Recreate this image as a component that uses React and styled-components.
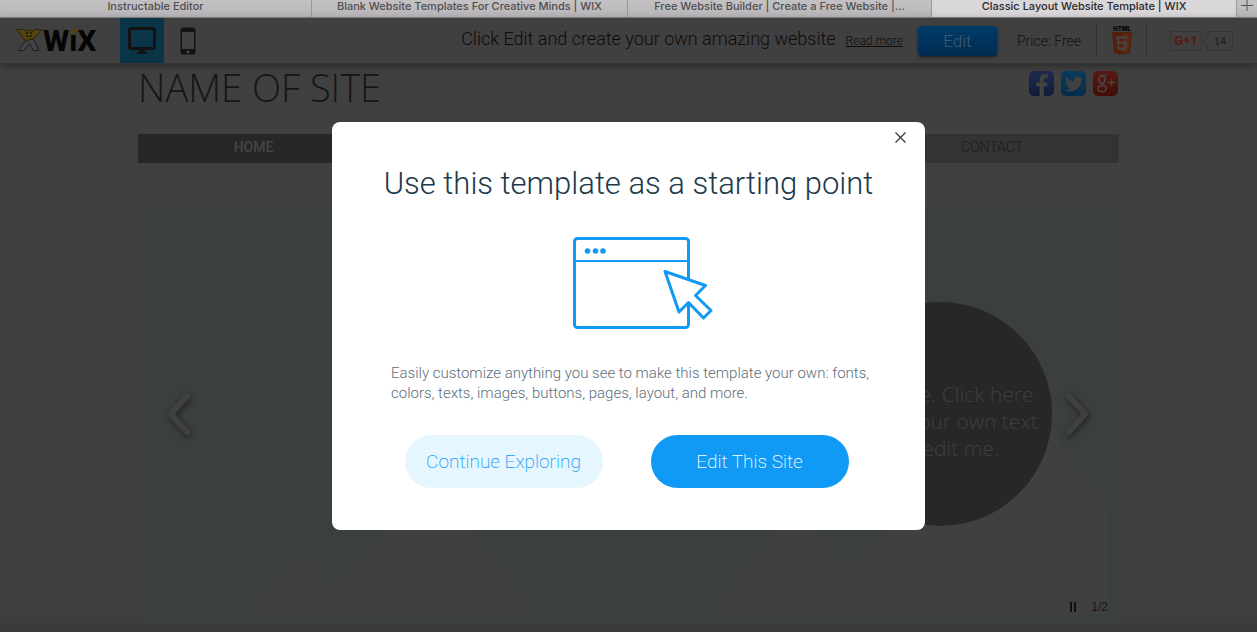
import React from "react"
import styled, { createGlobalStyle } from "styled-components"
import { FaFacebookF, FaTwitter } from "react-icons/fa"

const GlobalStyle = createGlobalStyle`
  * {
    box-sizing: border-box;
  }
  body {
    margin: 0;
    background: #404040;
    font-family: "Liberation Sans", Arial, sans-serif;
  }
  button {
    border: 0;
    padding: 0;
    background: none;
    font-family: inherit;
    cursor: pointer;
  }
  svg {
    display: block;
  }
`

const Page = styled.div`
  min-height: 100vh;
  overflow: hidden;
  background: linear-gradient(to top, #3a3a3a 0, #404040 28px);
`

/* browser tabs */
const TabBar = styled.nav`
  display: grid;
  grid-template-columns: 312fr 316fr 304fr 305fr 20px;
  height: 18px;
  border-bottom: 1px solid #8a898a;
  background: linear-gradient(#c3c1c3, #b9b7b9);
`

const Tab = styled.button`
  height: 17px;
  padding: 0 4px 4px;
  overflow: hidden;
  border-right: 1px solid #9a989a;
  background: ${props => (props.$active ? "#d9d7d9" : "transparent")};
  color: ${props => (props.$active ? "#2b292b" : "#504e51")};
  font-family: Inter, sans-serif;
  font-size: 11px;
  font-weight: 500;
  line-height: 13px;
  white-space: nowrap;
`

const NewTab = styled.button`
  display: flex;
  justify-content: center;
  height: 17px;
  color: #555;
`

/* editor bar */
const Header = styled.header`
  position: relative;
  display: flex;
  align-items: center;
  height: 46px;
  padding: 0 24px 0 16px;
  border-bottom: 1px solid #353535;
  background: #404040;
  box-shadow: 0 2px 8px rgba(0, 0, 0, 0.35);
`

const Logo = styled.a`
  margin-right: 20px;
`

const Device = styled.button`
  display: flex;
  align-items: center;
  justify-content: center;
  width: ${props => (props.$active ? "44px" : "48px")};
  height: 45px;
  background: ${props => (props.$active ? "#0a3447" : "transparent")};
`

const Promo = styled.div`
  display: flex;
  align-items: center;
  gap: 10px;
  margin-left: auto;
  color: #0c0c0c;
`

const PromoText = styled.p`
  margin: 0 0 3px;
  font-family: Roboto, sans-serif;
  font-size: 18px;
  font-weight: 300;
  line-height: 24px;
  white-space: nowrap;
`

const ReadMore = styled.a`
  color: #0c0c0c;
  font-family: Roboto, sans-serif;
  font-size: 12px;
  font-weight: 300;
  line-height: 16px;
  white-space: nowrap;
`

const EditButton = styled.button`
  width: 79px;
  height: 30px;
  margin: 0 20px 0 15px;
  border-radius: 4px;
  background: linear-gradient(#003d6b, #002a50);
  box-shadow: 0 1px 3px rgba(0, 0, 0, 0.6);
  color: #405b72;
  font-family: Roboto, sans-serif;
  font-size: 17px;
  font-weight: 300;
`

const Price = styled.span`
  margin-right: 15px;
  color: #101010;
  font-family: Roboto, sans-serif;
  font-size: 14px;
  font-weight: 300;
  white-space: nowrap;
`

const Badge = styled.div`
  display: flex;
  align-items: center;
  justify-content: center;
  width: 51px;
  height: 32px;
  margin-right: 23px;
  border: solid #303030;
  border-width: 0 1px;
`

const PlusOne = styled.button`
  width: 32px;
  height: 20px;
  border: 1px solid #353535;
  border-radius: 2px;
  color: #591812;
  font-family: Roboto, sans-serif;
  font-size: 13px;
  font-weight: 700;
`

const Count = styled.span`
  position: relative;
  width: 26px;
  height: 20px;
  margin-left: 5px;
  border: 1px solid #353535;
  border-radius: 2px;
  color: #1c1c1c;
  font-size: 11px;
  line-height: 18px;
  text-align: center;

  &::before {
    content: "";
    position: absolute;
    top: 6px;
    left: -4px;
    width: 6px;
    height: 6px;
    border: solid #353535;
    border-width: 0 0 1px 1px;
    background: #404040;
    transform: rotate(45deg);
  }
`

/* template preview */
const Site = styled.main`
  max-width: 981px;
  margin: 0 auto;
`

const SiteTop = styled.div`
  display: flex;
  justify-content: space-between;
  height: 70px;
`

const SiteName = styled.h1`
  margin: 0;
  color: #161616;
  font-family: "Open Sans", sans-serif;
  font-size: 38px;
  font-weight: 300;
  line-height: 46px;
  white-space: nowrap;
`

const Socials = styled.div`
  display: flex;
  gap: 7px;
  padding: 7px 1px 0 0;
`

const Social = styled.a`
  display: flex;
  align-items: ${props => props.$align || "center"};
  justify-content: center;
  width: 25px;
  height: 25px;
  overflow: hidden;
  border-radius: 5px;
  background: ${props => props.$bg};
  color: #414141;
`

const SiteNav = styled.nav`
  display: flex;
  justify-content: space-between;
  margin-bottom: 43px;
  background: #333;
`

const NavLink = styled.a`
  width: ${props => (props.$active ? "231px" : "254px")};
  background: ${props => (props.$active ? "#272727" : "transparent")};
  color: ${props => (props.$active ? "#454545" : "#1c1c1c")};
  font-family: Roboto, sans-serif;
  font-size: 14px;
  font-weight: ${props => (props.$active ? 500 : 300)};
  line-height: 26px;
  padding-bottom: 3px;
  text-align: center;
  text-decoration: none;
`

const Gallery = styled.section`
  position: relative;
  display: flex;
  align-items: center;
  justify-content: space-between;
  height: 418px;
  padding: 0 29px 2px 28px;
  background: #3b3f3f;
`

const Scene = styled.svg`
  position: absolute;
  inset: 0;
`

const Bubble = styled.div`
  position: absolute;
  top: 96px;
  right: 67px;
  display: flex;
  align-items: center;
  justify-content: center;
  width: 224px;
  height: 224px;
  padding-top: 14px;
  border-radius: 50%;
  background: #272727;
  color: #3f3f3f;
  font-family: "Open Sans", sans-serif;
  font-size: 21px;
  font-weight: 300;
  line-height: 27px;
  text-align: center;
  white-space: nowrap;
`

const Arrow = styled.button`
  position: relative;
  filter: drop-shadow(1px 2px 3px rgba(0, 0, 0, 0.5));
`

const Pager = styled.div`
  position: absolute;
  right: 11px;
  bottom: 9px;
  display: flex;
  align-items: center;
  gap: 15px;
  color: #161616;
  font-size: 12px;
  line-height: 16px;
`

/* dialog */
const Overlay = styled.div`
  position: fixed;
  inset: 0;
  display: flex;
  align-items: flex-start;
  justify-content: center;
  padding-top: 122px;
`

const Dialog = styled.div`
  position: relative;
  width: 593px;
  padding: 42px 59px;
  border-radius: 8px;
  background: #fff;
`

const Close = styled.button`
  position: absolute;
  top: 5px;
  right: 15px;
  display: flex;
  align-items: center;
  justify-content: center;
  width: 20px;
  height: 20px;
`

const Title = styled.h2`
  margin: 0 -20px 33px;
  color: #20394a;
  font-family: Roboto, sans-serif;
  font-size: 31px;
  font-weight: 300;
  line-height: 40px;
  text-align: center;
  white-space: nowrap;
`

const Art = styled.svg`
  margin: 0 auto 34px;
`

const Copy = styled.p`
  margin: 0 -10px 32px 0;
  color: #5c6e7a;
  font-family: Roboto, sans-serif;
  font-size: 15px;
  font-weight: 300;
  line-height: 20px;
`

const Actions = styled.div`
  display: flex;
  justify-content: center;
  gap: 48px;
  padding-right: 4px;
`

const Pill = styled.button`
  width: 198px;
  height: 53px;
  border-radius: 27px;
  background: ${props => (props.$primary ? "#1199f6" : "#e6f6ff")};
  color: ${props => (props.$primary ? "#fff" : "#1199f6")};
  font-family: Roboto, sans-serif;
  font-size: 19px;
  font-weight: 200;
`

const tabs = [
  "Instructable Editor",
  "Blank Website Templates For Creative Minds | WIX",
  "Free Website Builder | Create a Free Website |…",
  "Classic Layout Website Template | WIX",
]

function WixLogo() {
  return (
    <svg width="84" height="40" viewBox="0 -6 84 40">
      <path
        d="M9.5 13.5 L2.5 23.5 H7.5 L13.5 16.5 L17.5 23.5 H23 L17 12 Z"
        fill="#454545"
        stroke="#1e1e1e"
      />
      <path
        d="M.5 2.5 H7 L9.500 4 Q13 2.200 16.500 4 L19 2.500 H25.500 L18 11.500 Q12 12 9.500 15 L8 12 Z"
        fill="#54430a"
        stroke="#2b240b"
      />
      <circle cx="11" cy="6" r="1" fill="#161309" />
      <circle cx="15" cy="6" r="1" fill="#161309" />
      <path d="M10 8.500 Q13 10.500 16 8.500" fill="none" stroke="#161309" />
      <text x="27" y="24" fill="#050505" fontFamily="Roboto, sans-serif" fontSize="30" fontWeight="800">
        WiX
      </text>
      <path d="M54.500 0 h7 v6.500 h-7 Z" fill="#404040" />
      <ellipse cx="58" cy="4.200" rx="3" ry="2.200" fill="#54430a" transform="rotate(-30 58 4.200)" />
    </svg>
  )
}

function Html5Icon() {
  return (
    <svg width="22" height="30" viewBox="0 0 22 30">
      <text x="11" y="5" textAnchor="middle" fill="#080808" fontFamily="Inter, sans-serif" fontSize="6" fontWeight="900">
        HTML
      </text>
      <path d="M1 6 H21 L19.200 26.500 L11 29 L2.800 26.500 Z" fill="#51200f" />
      <path d="M11 7.700 H19.200 L17.600 25.200 L11 27.200 Z" fill="#5c2a14" />
      <path
        d="M16.500 11.500 H6.700 L7.200 17 H15 L14.500 22 L11 23.200 L7.500 22 L7.300 19.500"
        fill="none"
        stroke="#464340"
        strokeWidth="2.400"
      />
    </svg>
  )
}

function DesktopIcon() {
  return (
    <svg width="28" height="28" viewBox="0 0 28 28">
      <rect x="1.500" y="1.500" width="25" height="20" rx="2" fill="none" stroke="#121212" strokeWidth="3" />
      <path d="M11 22 h6 v3 h2 v2 H9 v-2 h2 Z" fill="#121212" />
    </svg>
  )
}

function PhoneIcon() {
  return (
    <svg width="16" height="28" viewBox="0 0 16 28">
      <rect x=".5" y=".5" width="15" height="27" rx="3" fill="#121212" />
      <rect x="2" y="5" width="12" height="17" fill="#424242" />
      <circle cx="8" cy="24.800" r="1.600" fill="#424242" />
    </svg>
  )
}

function GooglePlusIcon() {
  return (
    <svg width="25" height="25" viewBox="0 0 25 25" fill="none" stroke="#454545">
      <ellipse cx="9" cy="8.500" rx="3" ry="4" strokeWidth="1.800" />
      <path d="M10 4 H14.500" strokeWidth="1.400" />
      <path d="M10.500 12 Q8.500 13.500 10.500 14.500" strokeWidth="1.600" />
      <ellipse cx="9" cy="17.500" rx="4" ry="3.200" strokeWidth="1.800" />
      <path d="M15 11.500 H22 M18.500 8 V15" strokeWidth="1.400" />
    </svg>
  )
}

function Chevron({ d }) {
  return (
    <svg width="26" height="44" viewBox="0 0 26 44">
      <path d={d} fill="none" stroke="#404040" strokeWidth="6" strokeLinecap="round" strokeLinejoin="round" />
    </svg>
  )
}

function WindowArt() {
  return (
    <Art width="168" height="92" viewBox="0 0 168 92" fill="none" stroke="#1199f6" strokeWidth="3">
      <rect x="29.500" y="1.500" width="114" height="89" rx="3" />
      <path d="M29 24 H144" strokeWidth="2" />
      <g fill="#1199f6" stroke="none">
        <circle cx="42.500" cy="14" r="2.800" />
        <circle cx="50.500" cy="14" r="2.800" />
        <circle cx="58" cy="14" r="2.800" />
      </g>
      <path
        d="M120 34.500 L160.500 48.500 L150.500 58.500 L166 73.500 L158.500 81 L143.500 65.500 L134 75 Z"
        fill="#fff"
        strokeLinejoin="round"
      />
    </Art>
  )
}

export default function App() {
  return (
    <Page>
      <GlobalStyle />
      <TabBar>
        {tabs.map((tab, i) => (
          <Tab key={tab} $active={i === 3}>
            {tab}
          </Tab>
        ))}
        <NewTab aria-label="New tab">
          <svg width="12" height="12" viewBox="0 0 12 12" stroke="currentColor">
            <path d="M0 5.500 H12 M6 0 V11" />
          </svg>
        </NewTab>
      </TabBar>

      <Header>
        <Logo href="#" aria-label="Wix">
          <WixLogo />
        </Logo>
        <Device $active aria-label="Desktop view">
          <DesktopIcon />
        </Device>
        <Device aria-label="Mobile view">
          <PhoneIcon />
        </Device>
        <Promo>
          <PromoText>Click Edit and create your own amazing website</PromoText>
          <ReadMore href="#">Read more</ReadMore>
        </Promo>
        <EditButton>Edit</EditButton>
        <Price>Price: Free</Price>
        <Badge>
          <Html5Icon />
        </Badge>
        <PlusOne>G+1</PlusOne>
        <Count>14</Count>
      </Header>

      <Site>
        <SiteTop>
          <SiteName>NAME OF SITE</SiteName>
          <Socials>
            <Social href="#" aria-label="Facebook" $align="flex-end" $bg="linear-gradient(#1d2b4d, #101b3a)">
              <FaFacebookF size={22} />
            </Social>
            <Social href="#" aria-label="Twitter" $bg="linear-gradient(#0b3c5c, #032d4a)">
              <FaTwitter size={18} />
            </Social>
            <Social href="#" aria-label="Google Plus" $bg="linear-gradient(#5a1a12, #430d07)">
              <GooglePlusIcon />
            </Social>
          </Socials>
        </SiteTop>
        <SiteNav>
          <NavLink href="#" $active>
            HOME
          </NavLink>
          <NavLink href="#">CONTACT</NavLink>
        </SiteNav>
        <Gallery>
          <Scene width="100%" height="100%" viewBox="0 0 981 418" fill="#404040">
            <path d="M108 409 L165 346 L193 382 L298 273 L395 409 Z" />
            <path d="M570 408 L662 302 L710 367 L882 186 L969 301 V408 Z" />
          </Scene>
          <Bubble>
            I'm a title. Click here
            <br />
            to add your own text
            <br />
            and edit me.
          </Bubble>
          <Arrow aria-label="Previous">
            <Chevron d="M21 4 L5 22 L21 40" />
          </Arrow>
          <Arrow aria-label="Next">
            <Chevron d="M5 4 L21 22 L5 40" />
          </Arrow>
          <Pager>
            <svg width="6" height="10" viewBox="0 0 6 10" fill="#101010">
              <path d="M0 0 H2 V10 H0 Z M4 0 H6 V10 H4 Z" />
            </svg>
            <span>1/2</span>
          </Pager>
        </Gallery>
      </Site>

      <Overlay>
        <Dialog role="dialog" aria-labelledby="dialog-title">
          <Close aria-label="Close">
            <svg width="11" height="11" viewBox="0 0 11 11" stroke="#2d3740" strokeWidth="1.200">
              <path d="M.5 .5 L10.500 10.500 M10.500 .5 L.5 10.500" />
            </svg>
          </Close>
          <Title id="dialog-title">Use this template as a starting point</Title>
          <WindowArt />
          <Copy>
            Easily customize anything you see to make this template your own: fonts, colors, texts, images, buttons,
            pages, layout, and more.
          </Copy>
          <Actions>
            <Pill>Continue Exploring</Pill>
            <Pill $primary>Edit This Site</Pill>
          </Actions>
        </Dialog>
      </Overlay>
    </Page>
  )
}
